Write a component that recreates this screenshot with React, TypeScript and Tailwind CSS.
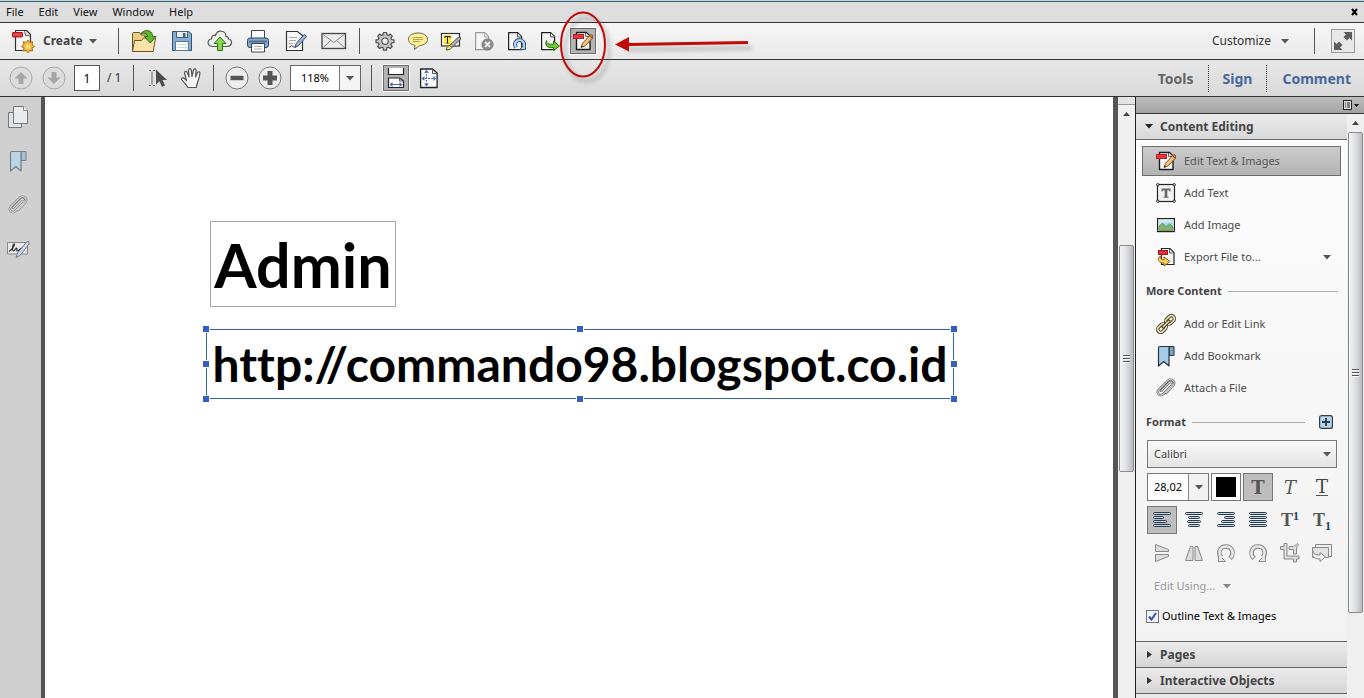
import { useState } from "react";
import type { ReactNode } from "react";

type IconProps = { children: ReactNode; w?: number; h?: number };

function Svg({ children, w = 24, h = 24 }: IconProps) {
  return (
    <svg width={w} height={h} viewBox={`0 0 ${w} ${h}`} fill="none" aria-hidden="true" className="shrink-0">
      {children}
    </svg>
  );
}

const Caret = ({ dark = false }: { dark?: boolean }) => (
  <svg width="8" height="5" viewBox="0 0 8 5" aria-hidden="true" className="shrink-0">
    <path d="M0 0H8L4 4.6Z" fill={dark ? "#222" : "#555"} />
  </svg>
);

const CreateIcon = () => (
  <Svg>
    <path d="M4.500 1.500h11l4 4v16h-15z" fill="#f6f6f6" stroke="#333" strokeWidth="1.200" strokeLinejoin="round" />
    <path d="M13.500 2l1 4.500 5 .5" fill="#ddd" stroke="#666" />
    <rect x="1.500" y="3.500" width="10" height="4.500" rx=".5" fill="#e5434a" stroke="#a8141c" />
    <path d="M17 11l1.700 2.400 2.900-.6-.5 2.900 2.400 1.800-2.500 1.600.6 2.900-2.900-.5L17 23.800l-1.700-2.300-2.900.5.6-2.900-2.500-1.600 2.400-1.800-.5-2.900 2.900.6z" fill="#f5b93c" stroke="#a5701a" />
    <circle cx="17" cy="17.400" r="2.500" fill="#fbd77c" />
  </Svg>
);

const OpenIcon = () => (
  <Svg w={26}>
    <path d="M1.500 22V4.500q0-1 1-1h6l2 2.500h9v16z" fill="#e9cd83" stroke="#6a5426" strokeLinejoin="round" />
    <path d="M1.500 22.500L3.500 11.500h7l2-2.500H24.500l-2.300 13.500z" fill="#f8e3a6" stroke="#6a5426" strokeLinejoin="round" />
    <path d="M9.500 5C12 .8 21 -.8 21.700 7.500H25L19.300 14 13.500 7.500h3.200C16.300 3.800 12.500 3.500 9.500 5z" fill="#62b52c" stroke="#2d6b12" strokeLinejoin="round" />
  </Svg>
);

const SaveIcon = () => (
  <Svg w={22} h={22}>
    <path d="M1.500 1.500H18l2.500 2.500v16.500h-19z" fill="#86aed2" stroke="#354f6b" strokeLinejoin="round" />
    <rect x="5.500" y="1.500" width="11" height="6" fill="#e8eef3" stroke="#4a6079" />
    <rect x="12" y="3" width="2.500" height="4" fill="#4a6079" />
    <rect x="4.500" y="11.500" width="13" height="9" fill="#fdfdfd" stroke="#5d7a97" />
    <path d="M6.500 14.500h9M6.500 17.500h9" stroke="#9bb" strokeDasharray="1 1" />
  </Svg>
);

const CloudIcon = () => (
  <Svg w={26} h={22}>
    <path d="M6 16.500C-.5 16.500 0 9.500 4.500 9 4 6 7 4.500 8.500 5.500 10-.5 19-.2 19 6.500c2 0 2.500 1 2.500 2.500C26 9.500 25.500 16.500 20 16.500z" fill="#f1f1f1" stroke="#555" strokeWidth="1.200" />
    <path d="M13 7l6 6.500h-3.500v7h-5v-7H7z" fill="#8ad850" stroke="#2d7312" strokeLinejoin="round" />
  </Svg>
);

const PrintIcon = () => (
  <Svg>
    <path d="M5.500 9.500v-8h13v8" fill="#fff" stroke="#444" />
    <rect x="1.500" y="9" width="21" height="9.500" rx="2.500" fill="#86abd0" stroke="#2e4560" />
    <path d="M3 12.500h18" stroke="#4d6f92" strokeWidth="2" />
    <path d="M5.500 14.500h13v8.500h-13z" fill="#fff" stroke="#444" />
    <path d="M8 17.500h8M8 20h8" stroke="#aaa" />
  </Svg>
);

const SignIcon = () => (
  <Svg>
    <path d="M2.500 2.500h11l5 4v15h-16z" fill="#f7f7f7" stroke="#333" strokeWidth="1.200" />
    <path d="M5 8.500h8M5 11.500h7M5 14.500h4" stroke="#aaa" />
    <path d="M5 18.500q3-3 4-1t3-.5" stroke="#444" />
    <path d="M11 18.500l1.200-4 8-9 2.300 2-8 9z" fill="#9dbde0" stroke="#2e4560" strokeLinejoin="round" />
  </Svg>
);

const MailIcon = () => (
  <Svg w={26} h={18}>
    <rect x="1" y="1.500" width="23.500" height="15" fill="#eaeaea" stroke="#444" strokeWidth="1.300" />
    <path d="M1.500 2l11.200 8.500L24 2M1.500 16l8.500-7.500M24 16l-8.500-7.500" stroke="#888" />
  </Svg>
);

const GearIcon = () => (
  <Svg w={20} h={20}>
    <path d="M8.500 1.500h3l.4 2.300 1.500.6 1.900-1.300 2 2-1.300 1.900.6 1.500 2.400.4v2.700l-2.400.4-.6 1.600 1.300 1.900-2 2-1.900-1.300-1.500.6-.4 2.300h-3l-.4-2.300-1.500-.6-1.900 1.300-2-2L4 13.600 3.400 12 1 11.600V8.900l2.400-.4L4 7 2.700 5.100l2-2 1.900 1.300 1.500-.6z" fill="#c4c4c4" stroke="#4c4c4c" strokeWidth="1.200" strokeLinejoin="round" />
    <circle cx="10" cy="10.200" r="3.200" fill="#f0f0f0" stroke="#555" strokeWidth="1.200" />
  </Svg>
);

const CommentIcon = () => (
  <Svg w={22} h={20}>
    <path d="M11 2c5.500 0 9.500 2.500 9.500 6.300 0 3.500-3.500 6-8 6.300L7.500 18.500l.5-4.200C4 13.700 1.500 11.500 1.500 8.300 1.500 4.500 5.500 2 11 2z" fill="#fff09a" stroke="#6b6648" strokeLinejoin="round" />
    <path d="M6 6.500h10M6 8.500h10M6 10.500h7" stroke="#b3a352" />
  </Svg>
);

const HighlightIcon = () => (
  <Svg w={22} h={20}>
    <rect x="1.500" y="2.500" width="18" height="12.500" fill="#fff" stroke="#333" strokeWidth="1.200" />
    <rect x="3.500" y="4" width="8" height="9.500" fill="#ffe93c" />
    <path d="M5 5.500h5M7.500 5.500v6.500M6.500 12h2M5 5v2M10 5v2" stroke="#222" />
    <path d="M9 15l9-8.500q3-1.500 2.500 1.500L12 16.500z" fill="#b5b5b5" stroke="#444" />
    <path d="M7 16.500l2.500-2.500 2.500 2.500-2 2-4 .5z" fill="#f7e33a" stroke="#555" />
  </Svg>
);

const PageShape = ({ faded = false }: { faded?: boolean }) => (
  <>
    <path d="M1.600 1.600h9l4 4v13h-13z" fill="#f5f5f5" stroke={faded ? "#999" : "#222"} strokeWidth="1.200" />
    <path d="M10.500 2v4h4" fill="#e3e3e3" stroke={faded ? "#aaa" : "#555"} />
  </>
);

const DeletePageIcon = () => (
  <Svg w={20} h={20}>
    <PageShape faded />
    <circle cx="13.500" cy="13.500" r="5.500" fill="#8d8d8d" stroke="#777" />
    <path d="M11 11l5 5M16 11l-5 5" stroke="#eee" strokeWidth="1.800" />
  </Svg>
);

const RotatePageIcon = () => (
  <Svg w={20} h={20}>
    <PageShape />
    <path d="M9 16.500c-2.500-4.500.5-7.500 3.500-7.500s5.500 3 4 6.500" stroke="#31567a" strokeWidth="4" />
    <path d="M18.500 13v5.500h-6z" fill="#b5d3ef" stroke="#31567a" strokeLinejoin="round" />
    <path d="M9 16.500c-2.500-4.500.5-7.500 3.500-7.500s5.500 3 4 6.500" stroke="#b5d3ef" strokeWidth="2.200" />
  </Svg>
);

const ExtractIcon = () => (
  <Svg w={20} h={20}>
    <PageShape />
    <path d="M6.500 9.500c0 4 3 4 7 3.500V10l6 5-6 4.500V16.500c-6 .8-9-2-7-7z" fill="#73c936" stroke="#2a6a10" strokeLinejoin="round" />
  </Svg>
);

const EditPdfIcon = () => (
  <Svg w={20} h={20}>
    <path d="M3.500 1.500h10l3.500 3.500v13.500H3.500z" fill="#fdfdfd" stroke="#1c1c1c" strokeWidth="1.400" strokeLinejoin="round" />
    <path d="M12.500 2v3.500h4" fill="#ddd" stroke="#666" />
    <rect x=".5" y="3.500" width="10" height="4" fill="#e5343d" stroke="#b81e27" />
    <path d="M8 16.500l1.500-4.200 7-7.500 2.800 2.400-7 7.600z" fill="#f4c27a" stroke="#7d4a1d" strokeLinejoin="round" />
    <path d="M16.500 4.800l1-1q1.600-.6 2.100 1.200l-.3 2.200z" fill="#f08c84" stroke="#7d4a1d" />
    <path d="M8 16.500l.7-2 1.400 1.200z" fill="#222" />
  </Svg>
);

const ArrowDisc = ({ down = false }: { down?: boolean }) => (
  <Svg>
    <circle cx="12" cy="12" r="11" fill="#dcdcdc" stroke="#a9a9a9" />
    <path d={down ? "M12 18l-6.500-6.500h4V6h5v5.500h4z" : "M12 6l6.500 6.500h-4V18h-5v-5.500h-4z"} fill="#a6a6a6" />
  </Svg>
);

const ZoomDisc = ({ plus = false }: { plus?: boolean }) => (
  <Svg>
    <circle cx="12" cy="12" r="11" fill="#ededed" stroke="#777" />
    <path d={plus ? "M9.500 5h5v4.500H19v5h-4.500V19h-5v-4.500H5v-5h4.500z" : "M5.500 9.800h13v4.400h-13z"} fill="#555" />
  </Svg>
);

const SelectIcon = () => (
  <Svg w={20} h={20}>
    <path d="M1 2.500h2M5 2.500h2M4 3.500v13M1 17.500h2M5 17.500h2" stroke="#666" />
    <path d="M8 1.500l11 10.500h-4.500l2.500 5.500-3 1.400-2.500-5.600L8 16.500z" fill="#4d4d4d" />
  </Svg>
);

const HandIcon = () => (
  <Svg w={22} h={22}>
    <path d="M8 20.500C6 17.500 3.500 15 1.500 12.500c-.3-2 2-2 3-.8l2 1.800L4.500 6c0-2 2.300-2 2.800-.3L9 10 8.500 3c.3-1.800 2.400-1.800 2.800 0l.7 6.500 1.500-6.700c.7-1.600 2.700-1 2.600.8L15.500 10l2-4.500c1-1.400 2.700-.6 2.400 1-.4 4-1.400 6-2.400 9l-1.300 5z" fill="#f4f4f4" stroke="#555" strokeWidth="1.200" strokeLinejoin="round" />
  </Svg>
);

const FitWidthIcon = () => (
  <Svg w={20} h={22}>
    <path d="M2.500 1v6.500h15V1" fill="#fff" stroke="#222" strokeWidth="1.200" />
    <path d="M2.500 20.500v-9.500h11l4 3v6.500z" fill="#fff" stroke="#222" strokeWidth="1.200" />
    <path d="M13.500 11v3h4" stroke="#555" />
    <path d="M5 17.500h10" stroke="#4a69b5" />
    <path d="M3.500 17.500l3-2.500v5zM16.500 17.500l-3-2.500v5z" fill="#4a69b5" />
  </Svg>
);

const FitPageIcon = () => (
  <Svg w={20} h={22}>
    <path d="M1.600 2h12l4.500 4v14.500H1.600z" fill="#fff" stroke="#222" strokeWidth="1.300" strokeLinejoin="round" />
    <path d="M13.500 2v4.500h4" stroke="#555" />
    <path d="M7.500 4v14M3 11.500h13" stroke="#4a69b5" strokeDasharray="2 1" />
    <path d="M7.500 2.800l2.500 3H5zM7.500 19.500l2.500-3H5zM2.500 11.500l3-2.500v5zM17.300 11.500l-3-2.500v5z" fill="#4a69b5" />
  </Svg>
);

const ExpandIcon = () => (
  <Svg w={20} h={20}>
    <path d="M10.500 1h8.500v8.500l-2.500-2.500-2.500 2.500-3.500-3.500 2.500-2.500zM9.500 19H1v-8.500l2.500 2.500 2.500-2.500 3.500 3.500-2.500 2.500z" fill="#5c5c5c" />
  </Svg>
);

const PagesIcon = () => (
  <Svg w={22}>
    <path d="M1.500 7.500h13v15h-13z" fill="#dde2e4" stroke="#777" />
    <path d="M6.500 1.500h10l4 4v13h-14z" fill="#e8ecee" stroke="#777" />
    <path d="M16.500 1.500v4h4" fill="#fff" stroke="#888" />
  </Svg>
);

const BookmarkIcon = ({ soft = false }: { soft?: boolean }) => (
  <Svg w={20} h={24}>
    <path d="M13 2.500h5v9h-5z" fill={soft ? "#a9c0d0" : "#7ba3c4"} stroke={soft ? "#71808c" : "#26343f"} />
    <path d="M2.500 22V4q0-1.500 1.500-1.500h11q-2 0-2 2V22l-5.200-4.500z" fill={soft ? "#bcd3e2" : "#a5cde9"} stroke={soft ? "#71808c" : "#26343f"} strokeWidth="1.200" strokeLinejoin="round" />
  </Svg>
);

const clipPath = "M5.500 14L14 5.300c2.500-2 4.800.6 2.800 2.900L8.500 17c-4 3.700-8.500-.2-5.500-4.200L12.800 3c4-3.300 9.200 1.200 5.700 5.500L11 16.500";

const ClipIcon = ({ soft = false }: { soft?: boolean }) => (
  <Svg w={22} h={22}>
    <g transform="translate(1 1) scale(.92)" strokeLinecap="round">
      <path d={clipPath} stroke={soft ? "#808080" : "#5a5a5a"} strokeWidth="2.500" />
      <path d={clipPath} stroke="#dedede" strokeWidth="1.100" />
    </g>
  </Svg>
);

const SignatureIcon = () => (
  <Svg w={24} h={20}>
    <path d="M1.500 3.500h20v11.500h-20z" fill="#e6e6e6" stroke="#888" />
    <path d="M3 12.500C7 10 9.500 4.500 8 5S6 12 7.500 12s2-3 3-3-.5 3 1 3 2-2 4-3" stroke="#333" strokeWidth="1.200" />
    <path d="M10 18.500l1.500-4.500L21 2.500q3-.5 2 2.500L14 16.500z" fill="#c3dced" stroke="#778" strokeLinejoin="round" />
  </Svg>
);

const AddTextIcon = () => (
  <Svg w={20} h={20}>
    <rect x="1.500" y="1.500" width="17" height="17" fill="#f2f2f2" stroke="#222" strokeWidth="1.200" />
    <path d="M5.500 5.500h9v3h-1l-.6-1.300h-1.600v6.300l1.200.3v1H7.500v-1l1.200-.3V7.200H7.100l-.6 1.300h-1z" fill="#666" />
    <g fill="#fff" stroke="#222">
      <circle cx="1.800" cy="1.800" r="1.200" /><circle cx="18.200" cy="1.800" r="1.200" /><circle cx="1.800" cy="18.200" r="1.200" /><circle cx="18.200" cy="18.200" r="1.200" />
    </g>
  </Svg>
);

const ImageIcon = () => (
  <Svg w={20} h={20}>
    <rect x="1.600" y="3.600" width="16.800" height="13" fill="#fff" stroke="#222" strokeWidth="1.200" />
    <path d="M3 5h14v10.500H3z" fill="#9fd0ee" />
    <path d="M3 5h14v3q-7-1-14 3z" fill="#cfe8f6" />
    <path d="M3 15.500V11l3.500-3 3.500 4 3.500-3 3.500 3v3.500z" fill="#7fb56c" stroke="#45803a" strokeWidth=".6" />
  </Svg>
);

const ExportIcon = () => (
  <Svg w={20} h={20}>
    <path d="M5.500 1.500h8.500l4 4v12H5.500z" fill="#fafafa" stroke="#222" strokeWidth="1.200" />
    <path d="M13.500 2v4h4" fill="#ddd" stroke="#666" />
    <rect x="2.500" y="3.500" width="9" height="4" fill="#e5343d" stroke="#a0141c" />
    <path d="M5.500 9C1 10 .3 15.500 8 16.200V19l6-4.500-6-4.500v2.800C4.500 12.800 4 10.500 5.500 9z" fill="#f8cf5c" stroke="#8c5c17" strokeLinejoin="round" />
  </Svg>
);

const LinkIcon = () => (
  <Svg w={20} h={20}>
    <g transform="rotate(-45 10 10)">
      <rect x="-.5" y="7" width="9.500" height="6" rx="3" stroke="#3b3420" strokeWidth="3.400" />
      <rect x="11" y="7" width="9.500" height="6" rx="3" stroke="#3b3420" strokeWidth="3.400" />
      <rect x="-.5" y="7" width="9.500" height="6" rx="3" stroke="#f3e6b5" strokeWidth="1.600" />
      <rect x="11" y="7" width="9.500" height="6" rx="3" stroke="#f3e6b5" strokeWidth="1.600" />
      <path d="M6 10h8" stroke="#3b3420" strokeWidth="3.400" strokeLinecap="round" />
      <path d="M6 10h8" stroke="#f3e6b5" strokeWidth="1.500" strokeLinecap="round" />
    </g>
  </Svg>
);

const AlignIcon = ({ rows }: { rows: [number, number][] }) => (
  <Svg w={18} h={18}>
    {rows.map(([x, w], i) => (
      <rect key={i} x={x - 0.5} y={1.5 + i * 4} width={w + 1} height="2" rx="1" fill="#bcd6ea" stroke="#2b3a47" />
    ))}
  </Svg>
);

const alignments: { name: string; rows: [number, number][] }[] = [
  { name: "Align left", rows: [[1, 16], [1, 9], [1, 12], [1, 16]] },
  { name: "Align center", rows: [[1, 16], [4, 10], [3, 12], [4, 10]] },
  { name: "Align right", rows: [[1, 16], [8, 9], [5, 12], [1, 16]] },
  { name: "Justify", rows: [[1, 16], [1, 16], [1, 16], [1, 16]] },
];

const FlipVIcon = () => (
  <Svg w={20} h={20}>
    <path d="M3.500 1.500l13 5v2h-13zM3.500 18.500l13-5v-2h-13z" fill="#ddd" stroke="#888" strokeLinejoin="round" />
  </Svg>
);
const FlipHIcon = () => (
  <Svg w={20} h={20}>
    <path d="M1.500 17.500l5-14H9v14zM18.500 17.500l-5-14H11v14z" fill="#ddd" stroke="#888" strokeLinejoin="round" />
  </Svg>
);
const RotateIcon = ({ right = false }: { right?: boolean }) => (
  <Svg w={20} h={20}>
    <g transform={right ? "translate(20 0) scale(-1 1)" : undefined}>
      <path d="M5 14.500C1.500 10 3.500 3.500 10 3.500s8.500 7 4 12" stroke="#8a8a8a" strokeWidth="4.600" />
      <path d="M2.500 11.500v7h7z" fill="#e6e6e6" stroke="#8a8a8a" strokeLinejoin="round" />
      <path d="M5.500 15C1.500 10 3.500 3.500 10 3.500s8.500 7 4.500 11.500" stroke="#e6e6e6" strokeWidth="2.600" />
    </g>
  </Svg>
);
const CropIcon = () => (
  <Svg w={20} h={20}>
    <path d="M4 .5h3V13h12v3h-2.500v3h-3v-3H4V6.500H.5v-3H4zM9 3.500h4.500l4-3 1 1-2 3V11h-3V6.500H9z" fill="#ddd" stroke="#888" strokeLinejoin="round" />
  </Svg>
);
const ReplaceIcon = () => (
  <Svg w={22} h={20}>
    <path d="M4.500 1.500h16v12h-16z" fill="#eee" stroke="#888" />
    <path d="M1.500 4.500h16v10h-16z" fill="#e2e2e2" stroke="#888" />
    <path d="M2 8c0 3 2.500 4 7 4V9.500l5.500 4.500L9 18.500V16c-6 0-9-3-7-8z" fill="#ededed" stroke="#888" strokeLinejoin="round" />
  </Svg>
);

const Separator = () => <span className="h-[26px] w-px shrink-0 bg-[#555]" />;

function BarButton({ label, active = false, wide = false, children }: { label: string; active?: boolean; wide?: boolean; children: ReactNode }) {
  return (
    <span className={wide ? "flex w-[38px] shrink-0 justify-center" : "flex w-[33px] shrink-0 justify-center"}>
      <button
        type="button"
        aria-label={label}
        className={
          active
            ? "flex size-[26px] items-center justify-center border border-[#6a6a6a] bg-[#b4b4b4] outline outline-white"
            : "flex size-[26px] items-center justify-center"
        }
      >
        {children}
      </button>
    </span>
  );
}

function ToolRow({ label, icon, active = false, menu = false }: { label: string; icon: ReactNode; active?: boolean; menu?: boolean }) {
  return (
    <button
      type="button"
      className={
        active
          ? "flex h-[30px] w-full items-center border border-[#6e6e6e] bg-linear-to-b from-[#cbcbcb] to-[#b3b3b3] px-[13px] text-left text-[#555]"
          : "flex h-[30px] w-full items-center border border-transparent px-[13px] text-left text-[#4a4a4a]"
      }
    >
      <span className="mr-2 flex w-5 justify-center">{icon}</span>
      <span className="flex-1">{label}</span>
      {menu && <span className="-mr-1"><Caret /></span>}
    </button>
  );
}

const cell = "flex h-7 w-[30px] items-center justify-center";
const cellOn = "flex h-7 w-[30px] items-center justify-center border border-[#777] bg-[#bdbdbd]";

function Grip() {
  return (
    <span className="flex flex-col gap-px">
      {[0, 1, 2].map((i) => (
        <span key={i} className="h-[2px] w-[7px] border-b border-white bg-[#555]" />
      ))}
    </span>
  );
}

function UpArrow() {
  return (
    <svg width="7" height="4" viewBox="0 0 7 4" aria-hidden="true">
      <path d="M3.500 0L7 4H0z" fill="#444" />
    </svg>
  );
}

const thumb = "flex w-full items-center justify-center rounded-[2px] border border-[#8a8a8a] bg-linear-to-r from-[#f4f4f4] via-[#dedfe2] to-[#b9bac0]";

const handles = [
  "-left-1 -top-1", "left-1/2 -ml-[3px] -top-1", "-right-1 -top-1",
  "-left-1 top-1/2 -mt-[3px]", "-right-1 top-1/2 -mt-[3px]",
  "-left-1 -bottom-1", "left-1/2 -ml-[3px] -bottom-1", "-right-1 -bottom-1",
];

export default function App() {
  const [outline, setOutline] = useState(true);
  return (
    <div className="relative flex h-screen flex-col overflow-hidden bg-[#f4f4f4] font-['Noto_Sans','Open_Sans',sans-serif] text-[11px] text-[#333]">
      <div className="h-px shrink-0 bg-[#bcd9e6]" />
      <nav className="flex h-[22px] shrink-0 items-center border-y border-t-[#46606e] border-b-[#333] bg-[#dedede] pl-[6px] text-[#111]">
        {["File", "Edit", "View", "Window", "Help"].map((m) => (
          <button key={m} type="button" className="mr-[15px]">{m}</button>
        ))}
        <button type="button" aria-label="Close" className="mr-[6px] ml-auto">
          <svg width="7" height="8" viewBox="0 0 7 8"><path d="M1 1l5 6M6 1L1 7" stroke="#000" strokeWidth="2" /></svg>
        </button>
      </nav>

      <div className="flex h-[37px] shrink-0 items-center border-b border-[#333] bg-linear-to-b from-[#f6f6f6] to-[#e9e9e9]">
        <button type="button" className="flex w-[118px] items-center pl-[11px] text-xs font-bold text-[#444]">
          <CreateIcon />
          <span className="mr-[6px] ml-2">Create</span>
          <Caret />
        </button>
        <Separator />
        <span className="w-[6px]" />
        <BarButton wide label="Open"><OpenIcon /></BarButton>
        <BarButton wide label="Save"><SaveIcon /></BarButton>
        <BarButton wide label="Upload to cloud"><CloudIcon /></BarButton>
        <BarButton wide label="Print"><PrintIcon /></BarButton>
        <BarButton wide label="Sign document"><SignIcon /></BarButton>
        <BarButton wide label="Send mail"><MailIcon /></BarButton>
        <span className="w-[6px]" />
        <Separator />
        <span className="w-2" />
        <BarButton label="Preferences"><GearIcon /></BarButton>
        <BarButton label="Add comment"><CommentIcon /></BarButton>
        <BarButton label="Highlight text"><HighlightIcon /></BarButton>
        <BarButton label="Delete pages"><DeletePageIcon /></BarButton>
        <BarButton label="Rotate pages"><RotatePageIcon /></BarButton>
        <BarButton label="Extract pages"><ExtractIcon /></BarButton>
        <BarButton active label="Edit text and images"><EditPdfIcon /></BarButton>
        <button type="button" className="mr-[25px] ml-auto flex items-center gap-[10px] text-xs">
          Customize <Caret />
        </button>
        <Separator />
        <button type="button" aria-label="Expand" className="mr-[9px] ml-4 flex size-6 items-center justify-center border border-[#999] bg-[#e8e8e8]">
          <ExpandIcon />
        </button>
      </div>

      <div className="flex h-[37px] shrink-0 items-center border-b border-[#333] bg-linear-to-b from-[#e7e7e7] to-[#d9d9d9]">
        <span className="w-1" />
        <BarButton label="Previous page"><ArrowDisc /></BarButton>
        <BarButton label="Next page"><ArrowDisc down /></BarButton>
        <input aria-label="Page number" defaultValue="1" className="ml-1 h-[26px] w-[26px] border border-[#555] bg-white text-center text-xs text-black" />
        <span className="ml-[7px] w-[26px] text-xs">/ 1</span>
        <Separator />
        <span className="w-[7px]" />
        <BarButton label="Selection tool"><SelectIcon /></BarButton>
        <BarButton label="Hand tool"><HandIcon /></BarButton>
        <span className="w-[6px]" />
        <Separator />
        <span className="w-[6px]" />
        <BarButton label="Zoom out"><ZoomDisc /></BarButton>
        <BarButton label="Zoom in"><ZoomDisc plus /></BarButton>
        <div className="ml-1 flex h-[26px] w-[71px] border border-[#666] bg-white">
          <input aria-label="Zoom level" defaultValue="118%" className="w-12 text-center text-[11px] text-black" />
          <button type="button" aria-label="Zoom menu" className="flex flex-1 items-center justify-center border-l border-[#777] bg-[#f4f4f4]"><Caret /></button>
        </div>
        <span className="w-[10px]" />
        <Separator />
        <span className="w-[7px]" />
        <BarButton active label="Fit width"><FitWidthIcon /></BarButton>
        <BarButton label="Fit page"><FitPageIcon /></BarButton>
        <div className="mr-[13px] ml-auto flex h-[27px] items-center text-[14px] font-bold text-[#47699a]">
          <button type="button" className="pr-[14px] text-[#666]">Tools</button>
          <button type="button" className="h-full border-x border-dotted border-[#333] px-[14px]">Sign</button>
          <button type="button" className="pl-[15px]">Comment</button>
        </div>
      </div>

      <div className="flex min-h-0 flex-1">
        <aside className="flex w-[41px] shrink-0 flex-col items-center gap-5 bg-[#cfcfcf] pt-2 pr-[5px]">
          <button type="button" aria-label="Page thumbnails" className="h-6"><PagesIcon /></button>
          <button type="button" aria-label="Bookmarks" className="h-6"><BookmarkIcon soft /></button>
          <button type="button" aria-label="Attachments" className="h-6"><ClipIcon soft /></button>
          <button type="button" aria-label="Signatures" className="h-6"><SignatureIcon /></button>
        </aside>

        <main className="min-w-0 flex-1 overflow-hidden border-r-[5px] border-l-4 border-[#555] bg-white font-['Lato',sans-serif] font-bold text-black [font-variant-ligatures:none]">
          <div className="mt-[124px] ml-[165px] flex h-[86px] w-[186px] items-center justify-center border border-[#a5a5a5] text-[61px] leading-none">
            Admin
          </div>
          <div className="relative mt-[22px] ml-[161px] flex h-[70px] w-[748px] items-center justify-center border border-[#3460c4] text-[48px] leading-none">
            http://commando98.blogspot.co.id
            {handles.map((h) => (
              <span key={h} className={`absolute size-[6px] bg-[#3460c4] outline outline-white ${h}`} />
            ))}
          </div>
        </main>

        <div className="flex w-[17px] shrink-0 flex-col items-center bg-[#efefef]">
          <div className="h-2 w-full border-b border-[#999] bg-[#e4e4e4]" />
          <div className="mt-[7px] h-[133px]"><UpArrow /></div>
          <div className="w-[15px]"><div className={`h-[227px] ${thumb}`}><Grip /></div></div>
        </div>

        <aside className="flex w-[229px] shrink-0 flex-col border-l border-[#222]">
          <div className="flex h-[17px] shrink-0 items-center justify-end gap-[2px] border-b border-[#333] bg-linear-to-b from-[#bdbdbd] to-[#a2a2a2] pr-[5px]">
            <svg width="9" height="10" viewBox="0 0 9 10" aria-hidden="true">
              <rect x=".5" y=".5" width="8" height="9" fill="#ddd" stroke="#222" />
              <path d="M2 3h1M4 3h3M2 5h1M4 5h3M2 7h1M4 7h3" stroke="#222" />
            </svg>
            <svg width="5" height="3" viewBox="0 0 5 3" aria-hidden="true"><path d="M0 0h5L2.500 3z" fill="#111" /></svg>
          </div>
          <div className="flex min-h-0 flex-1">
            <div className="min-w-0 flex-1 bg-linear-to-b from-[#fcfcfc] to-[#f1f1f1]">
              <button type="button" className="flex h-[26px] w-full items-center gap-[7px] border-b border-[#666] bg-linear-to-b from-[#eaeaea] to-[#d9d9d9] pl-[9px] text-xs font-bold text-[#444]">
                <Caret dark /> Content Editing
              </button>
              <div className="mt-[6px] flex flex-col gap-[2px] px-[6px]">
                <ToolRow active label="Edit Text & Images" icon={<EditPdfIcon />} />
                <ToolRow label="Add Text" icon={<AddTextIcon />} />
                <ToolRow label="Add Image" icon={<ImageIcon />} />
                <ToolRow menu label="Export File to..." icon={<ExportIcon />} />
              </div>
              <h2 className="mt-[9px] flex h-5 items-center gap-[6px] pr-[9px] pl-[10px] font-bold text-[#444]">
                More Content <span className="h-px flex-1 bg-[#aaa]" />
              </h2>
              <div className="mt-2 flex flex-col gap-[2px] px-[6px]">
                <ToolRow label="Add or Edit Link" icon={<LinkIcon />} />
                <ToolRow label="Add Bookmark" icon={<BookmarkIcon />} />
                <ToolRow label="Attach a File" icon={<ClipIcon />} />
              </div>
              <h2 className="mt-[9px] flex h-5 items-center gap-[6px] pr-[14px] pl-[10px] font-bold text-[#444]">
                Format <span className="mr-2 h-px flex-1 bg-[#aaa]" />
                <button type="button" aria-label="Add format" className="h-[14px]">
                  <Svg w={14} h={14}>
                    <rect x=".6" y=".6" width="12.800" height="12.800" rx="2" fill="#b9d4e8" stroke="#2b3c4a" strokeWidth="1.200" />
                    <path d="M7 3v8M3 7h8" stroke="#2b3c4a" strokeWidth="1.800" />
                  </Svg>
                </button>
              </h2>
              <div className="mt-2 flex w-[201px] flex-col gap-[5px] pl-[11px]">
                <div className="grid h-7 items-center">
                  <select aria-label="Font" className="col-start-1 row-start-1 h-7 w-full appearance-none border border-[#777] bg-linear-to-b from-[#fafafa] to-[#e3e3e3] px-[6px] text-[#444]">
                    <option>Calibri</option>
                  </select>
                  <span className="pointer-events-none col-start-1 row-start-1 mr-[6px] flex justify-self-end"><Caret /></span>
                </div>
                <div className="flex gap-[2px]">
                  <div className="flex h-7 w-[62px] border border-[#777] bg-white">
                    <input aria-label="Font size" defaultValue="28,02" className="w-10 text-center text-[11px] text-black" />
                    <button type="button" aria-label="Font size menu" className="flex flex-1 items-center justify-center border-l border-[#888] bg-[#f2f2f2]"><Caret /></button>
                  </div>
                  <button type="button" aria-label="Text color" className="flex h-7 w-[30px] items-center justify-center border border-[#777] bg-white">
                    <span className="size-5 bg-black" />
                  </button>
                  <button type="button" aria-label="Bold" className={`${cellOn} font-['DejaVu_Serif',serif] text-[18px] font-bold text-[#555]`}>T</button>
                  <button type="button" aria-label="Italic" className={`${cell} font-['DejaVu_Serif',serif] text-[18px] text-[#555] italic`}>T</button>
                  <button type="button" aria-label="Underline" className={`${cell} font-['DejaVu_Serif',serif] text-[18px] text-[#444]`}>
                    <span className="border-b border-[#555] leading-4">T</span>
                  </button>
                </div>
                <div className="flex gap-[2px]">
                  {alignments.map((a, i) => (
                    <button key={a.name} type="button" aria-label={a.name} className={i === 0 ? cellOn : cell}><AlignIcon rows={a.rows} /></button>
                  ))}
                  <button type="button" aria-label="Superscript" className={`${cell} font-['Liberation_Serif',serif] text-[18px] font-bold text-[#555]`}>
                    T<span className="mb-2 text-[12px] leading-none text-[#22445c]">1</span>
                  </button>
                  <button type="button" aria-label="Subscript" className={`${cell} font-['Liberation_Serif',serif] text-[18px] font-bold text-[#555]`}>
                    T<span className="mt-3 text-[12px] leading-none text-[#22445c]">1</span>
                  </button>
                </div>
                <div className="flex gap-[2px]">
                  <button type="button" aria-label="Flip vertical" className={cell}><FlipVIcon /></button>
                  <button type="button" aria-label="Flip horizontal" className={cell}><FlipHIcon /></button>
                  <button type="button" aria-label="Rotate counterclockwise" className={cell}><RotateIcon /></button>
                  <button type="button" aria-label="Rotate clockwise" className={cell}><RotateIcon right /></button>
                  <button type="button" aria-label="Crop" className={cell}><CropIcon /></button>
                  <button type="button" aria-label="Replace image" className={cell}><ReplaceIcon /></button>
                </div>
                <button type="button" disabled className="flex h-7 items-center gap-2 pl-[7px] text-[#999]">
                  Edit Using... <span className="opacity-70"><Caret /></span>
                </button>
              </div>
              <label className="mt-1 flex h-6 items-center gap-[3px] pl-[10px] text-black">
                <input type="checkbox" checked={outline} onChange={(e) => setOutline(e.target.checked)} className="peer sr-only" />
                <span className="flex size-[13px] items-center justify-center border border-[#777] bg-[#eef2fa] text-transparent peer-checked:text-[#35549c]">
                  <svg width="9" height="9" viewBox="0 0 9 9" aria-hidden="true"><path d="M1 4.500l2.500 3L8 1" stroke="currentColor" strokeWidth="2" fill="none" /></svg>
                </span>
                Outline Text & Images
              </label>
              <div className="mt-[13px] border-b border-[#666]">
                {["Pages", "Interactive Objects"].map((s) => (
                  <button key={s} type="button" className="flex h-[26px] w-full items-center gap-2 border-t border-[#666] bg-linear-to-b from-[#ebebeb] to-[#d6d6d6] pl-[11px] text-xs font-bold text-[#444]">
                    <svg width="5" height="7" viewBox="0 0 5 7" aria-hidden="true"><path d="M0 0l5 3.500L0 7z" fill="#333" /></svg>
                    {s}
                  </button>
                ))}
              </div>
              <div className="h-5 bg-[#e9e9e9]" />
            </div>
            <div className="flex w-[17px] shrink-0 flex-col items-center bg-[#efefef] pr-px">
              <div className="mt-[7px] h-[11px]"><UpArrow /></div>
              <div className="w-[15px]"><div className={`h-[481px] ${thumb}`}><Grip /></div></div>
            </div>
          </div>
        </aside>
      </div>

      <svg width="200" height="84" viewBox="0 0 200 84" fill="none" aria-hidden="true" className="pointer-events-none absolute top-[8px] left-[556px]">
        <g stroke="#555" opacity=".3" transform="translate(4 5)" className="blur-[2px]">
          <ellipse cx="27" cy="36.500" rx="22" ry="31.500" strokeWidth="3" />
          <path d="M66 36.500L192 35" strokeWidth="4" />
        </g>
        <ellipse cx="27" cy="36.500" rx="22" ry="32" stroke="#c00b0b" strokeWidth="2" />
        <path d="M72 36.500L192 34.500" stroke="#c00b0b" strokeWidth="3" />
        <path d="M59 36.500L73 29v14.500z" fill="#c00b0b" />
      </svg>
    </div>
  );
}
